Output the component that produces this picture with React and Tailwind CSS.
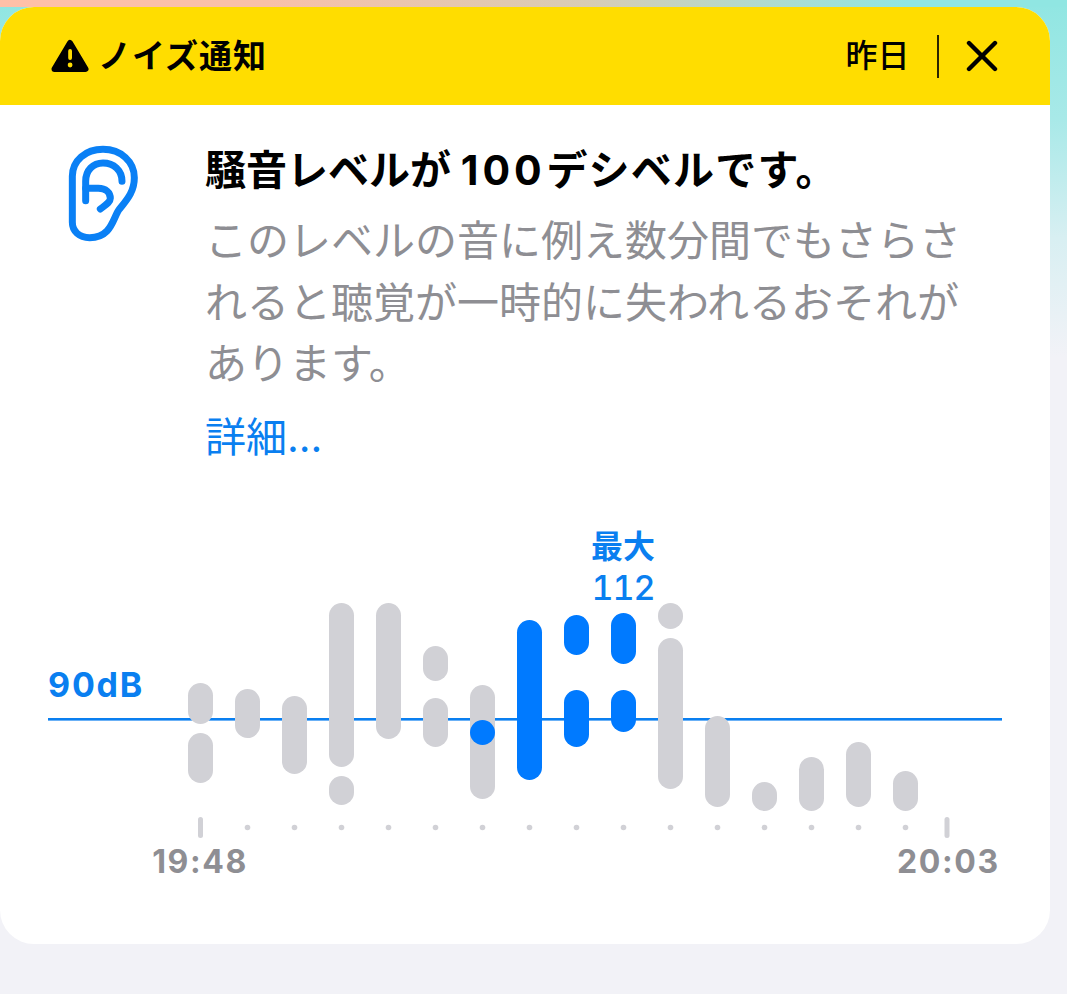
const BLUE = '#007aff';
const GRAY = '#d1d1d6';

// [centre x, top, bottom, colour]
const bars = [
  [200.5, 683, 724, GRAY], [200.5, 733, 783, GRAY],
  [247.5, 689, 738, GRAY],
  [294.5, 696, 774, GRAY],
  [341.5, 603, 767, GRAY], [341.5, 776, 805, GRAY],
  [388.5, 603, 739, GRAY],
  [435.5, 646, 681, GRAY], [435.5, 698, 747, GRAY],
  [482.5, 685, 799, GRAY], [482.5, 720, 745, BLUE],
  [529.5, 620, 780, BLUE],
  [576.5, 615, 655, BLUE], [576.5, 690, 747, BLUE],
  [623.5, 613, 664, BLUE], [623.5, 690, 732, BLUE],
  [670.5, 603, 629, GRAY], [670.5, 638, 789, GRAY],
  [717.5, 716, 807, GRAY],
  [764.5, 782, 811, GRAY],
  [811.5, 757, 811, GRAY],
  [858.5, 742, 807, GRAY],
  [905.5, 771, 811, GRAY],
];

const dots = [247.5, 294.5, 341.5, 388.5, 435.5, 482.5, 529.5, 576.5, 623.5, 670.5, 717.5, 764.5, 811.5, 858.5, 905.5];

const latinJp = { fontFamily: 'Inter, "Noto Sans CJK JP", sans-serif' };

function WarningIcon() {
  return (
    <svg width="38" height="34" viewBox="0 0 38 34" className="shrink-0">
      <path d="M19 4 L34.5 30 L3.5 30 Z" fill="#000" stroke="#000" strokeWidth="6" strokeLinejoin="round" />
      <rect x="17.2" y="10" width="3.8" height="11" rx="1.9" fill="#ffdd00" />
      <circle cx="19.1" cy="26" r="2.4" fill="#ffdd00" />
    </svg>
  );
}

function EarIcon() {
  return (
    <svg width="74" height="98" viewBox="202 436 222 294" fill="none" stroke="#0a80f5" strokeWidth="21" strokeLinecap="round" strokeLinejoin="round" className="shrink-0">
      <path d="M218 530 C218 482 258 449 310 449 C364 449 404 486 404 534 C404 576 382 600 358 630 C340 654 336 714 270 714 C238 714 218 694 218 668 Z" />
      <path d="M367 545 C367 512 342 490 310 490 C280 490 258 512 258 545 L258 603" />
      <path d="M258 566 L296 566 C318 566 332 578 332 596 C332 608 318 616 302 628" />
    </svg>
  );
}

function Chart() {
  return (
    <div className="relative mt-[70px] h-[324px] w-full">
      <svg width="1050" height="324" viewBox="0 537 1050 324" className="absolute left-0 top-0">
        <rect x="48" y="718" width="954" height="2.6" fill="#0a7ff0" />
        {bars.map(([x, top, bottom, color]) => (
          <rect key={`${x}-${top}`} x={x - 12.5} y={top} width="25" height={bottom - top} rx="12.5" fill={color} />
        ))}
        <rect x="198" y="817" width="5" height="21" rx="2.5" fill={GRAY} />
        <rect x="944.5" y="817" width="5" height="21" rx="2.5" fill={GRAY} />
        {dots.map((x) => (
          <circle key={x} cx={x} cy="827.5" r="2.8" fill={GRAY} />
        ))}
      </svg>
      <span className="absolute left-[48px] top-[128px] text-[34px] font-bold leading-[40px] tracking-[1.8px] text-[#0a7ff0]" style={latinJp}>90dB</span>
      <span className="absolute left-[590px] top-[-12px] w-[66px] text-center text-[32px] font-bold leading-[44px] text-[#0a7ff0]" style={latinJp}>最大</span>
      <span className="absolute left-[573px] top-[31px] w-[100px] text-center text-[34px] font-medium tabular-nums leading-[40px] tracking-[-1px] text-[#0a7ff0]" style={latinJp}>112</span>
      <span className="absolute left-[150px] top-[305px] w-[100px] text-center text-[32px] font-bold leading-[40px] tracking-[1.6px] text-[#8e8e93]" style={latinJp}>19:48</span>
      <span className="absolute left-[897px] top-[305px] w-[100px] text-center text-[32px] font-bold leading-[40px] tracking-[1.6px] text-[#8e8e93]" style={latinJp}>20:03</span>
    </div>
  );
}

export default function App() {
  return (
    <div className="h-[994px] w-[1067px] overflow-hidden bg-[linear-gradient(180deg,#90e6e2_0%,#a8e9e8_12%,#d8eff2_24%,#f2f2f7_36%,#f2f2f7_100%)]">
      <div className="h-[7px] w-full bg-[linear-gradient(90deg,#ffc0a8_0%,#f8c0a8_25%,#d8ccb4_55%,#90e6e2_85%,#90e6e2_100%)]" />
      <div className="h-[937px] w-[1050px] overflow-hidden rounded-[34px] bg-white" style={latinJp}>
        <header className="flex h-[98px] items-center justify-between bg-[#ffdd00] pl-[51px] pr-[52px]">
          <div className="flex items-center gap-[9px]">
            <WarningIcon />
            <span className="text-[33px] font-bold leading-none tracking-[1px] text-black">ノイズ通知</span>
          </div>
          <div className="flex items-center">
            <span className="text-[32px] font-medium leading-none text-black">昨日</span>
            <div className="ml-[27px] mr-[27px] h-[43px] w-[2.5px] bg-[#2b2500]" />
            <svg width="32" height="32" viewBox="0 0 32 32" fill="none" stroke="#000" strokeWidth="4.4" strokeLinecap="round">
              <path d="M3 3 L29 29" />
              <path d="M29 3 L3 29" />
            </svg>
          </div>
        </header>

        <div className="flex pl-[67px] pt-[40px]">
          <EarIcon />
          <div className="ml-[64px] w-[770px]">
            <h1 className="text-[41px] font-bold leading-[50px] text-black">
              騒音レベルが <span className="tracking-[4px] [word-spacing:-13px]">100 </span><span className="tracking-[1.2px]">デシベルです。</span>
            </h1>
            <p className="mt-[15px] text-[42px] leading-[61.5px] text-[#8e8e93]">
              このレベルの音に例え数分間でもさらされると聴覚が一時的に失われるおそれがあります。
            </p>
            <p className="mt-[12px] text-[41px] leading-[60px] text-[#0a7ff0]">詳細...</p>
          </div>
        </div>

        <Chart />
      </div>
    </div>
  );
}
